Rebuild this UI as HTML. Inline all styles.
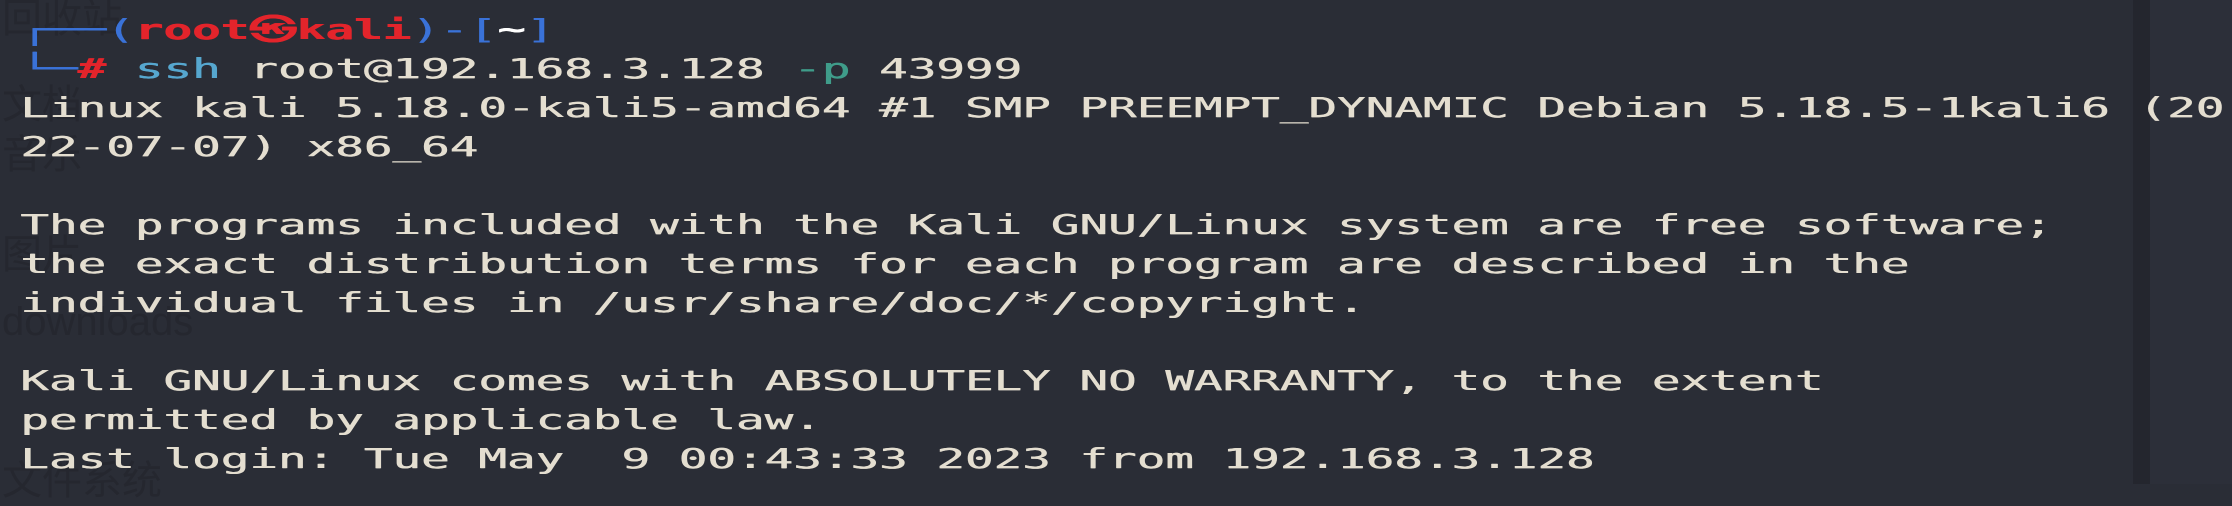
<!DOCTYPE html>
<html><head><meta charset="utf-8"><style>
html,body{margin:0;padding:0;}
body{width:2232px;height:484px;overflow:hidden;background:#2a2d36;position:relative;}
.strip1{position:absolute;left:2133px;top:0;width:17px;height:484px;background:#24262e;}
.strip2{position:absolute;left:2150px;top:0;width:82px;height:484px;background:#2c2f39;}
.ghost{position:absolute;font-family:"Liberation Sans","Noto Sans CJK SC",sans-serif;color:#25272f;font-size:40px;}
.term{position:absolute;left:20px;top:10px;font-family:"DejaVu Sans Mono","Liberation Mono",monospace;font-size:28px;line-height:39px;color:#e4ded0;white-space:pre;transform:scaleX(1.698);transform-origin:0 0;text-shadow:0.5px 0 0 currentColor;}
.b{color:#3a72d8}.r{color:#e3242b;font-weight:bold}.w{color:#ffffff;font-weight:bold}.c{color:#56a7cf}.g{color:#3f9c8a}
</style></head><body>
<div class="ghost" style="left:2px;top:-14px">回收站</div>
<div class="ghost" style="left:2px;top:72px">文档</div>
<div class="ghost" style="left:2px;top:122px">音乐</div>
<div class="ghost" style="left:2px;top:222px">图片</div>
<div class="ghost" style="left:2px;top:300px">downloads</div>
<div class="ghost" style="left:2px;top:448px">文件系统</div>
<div class="strip1"></div><div class="strip2"></div>
<div class="term"><span class="b">┌──(</span><span class="r">root㉿kali</span><span class="b">)-[</span><span class="w">~</span><span class="b">]</span>
<span class="b">└─</span><span class="r">#</span> <span class="c">ssh</span> root@192.168.3.128 <span class="g">-p</span> 43999
Linux kali 5.18.0-kali5-amd64 #1 SMP PREEMPT_DYNAMIC Debian 5.18.5-1kali6 (20
22-07-07) x86_64

The programs included with the Kali GNU/Linux system are free software;
the exact distribution terms for each program are described in the
individual files in /usr/share/doc/*/copyright.

Kali GNU/Linux comes with ABSOLUTELY NO WARRANTY, to the extent
permitted by applicable law.
Last login: Tue May  9 00:43:33 2023 from 192.168.3.128</div>
</body></html>
